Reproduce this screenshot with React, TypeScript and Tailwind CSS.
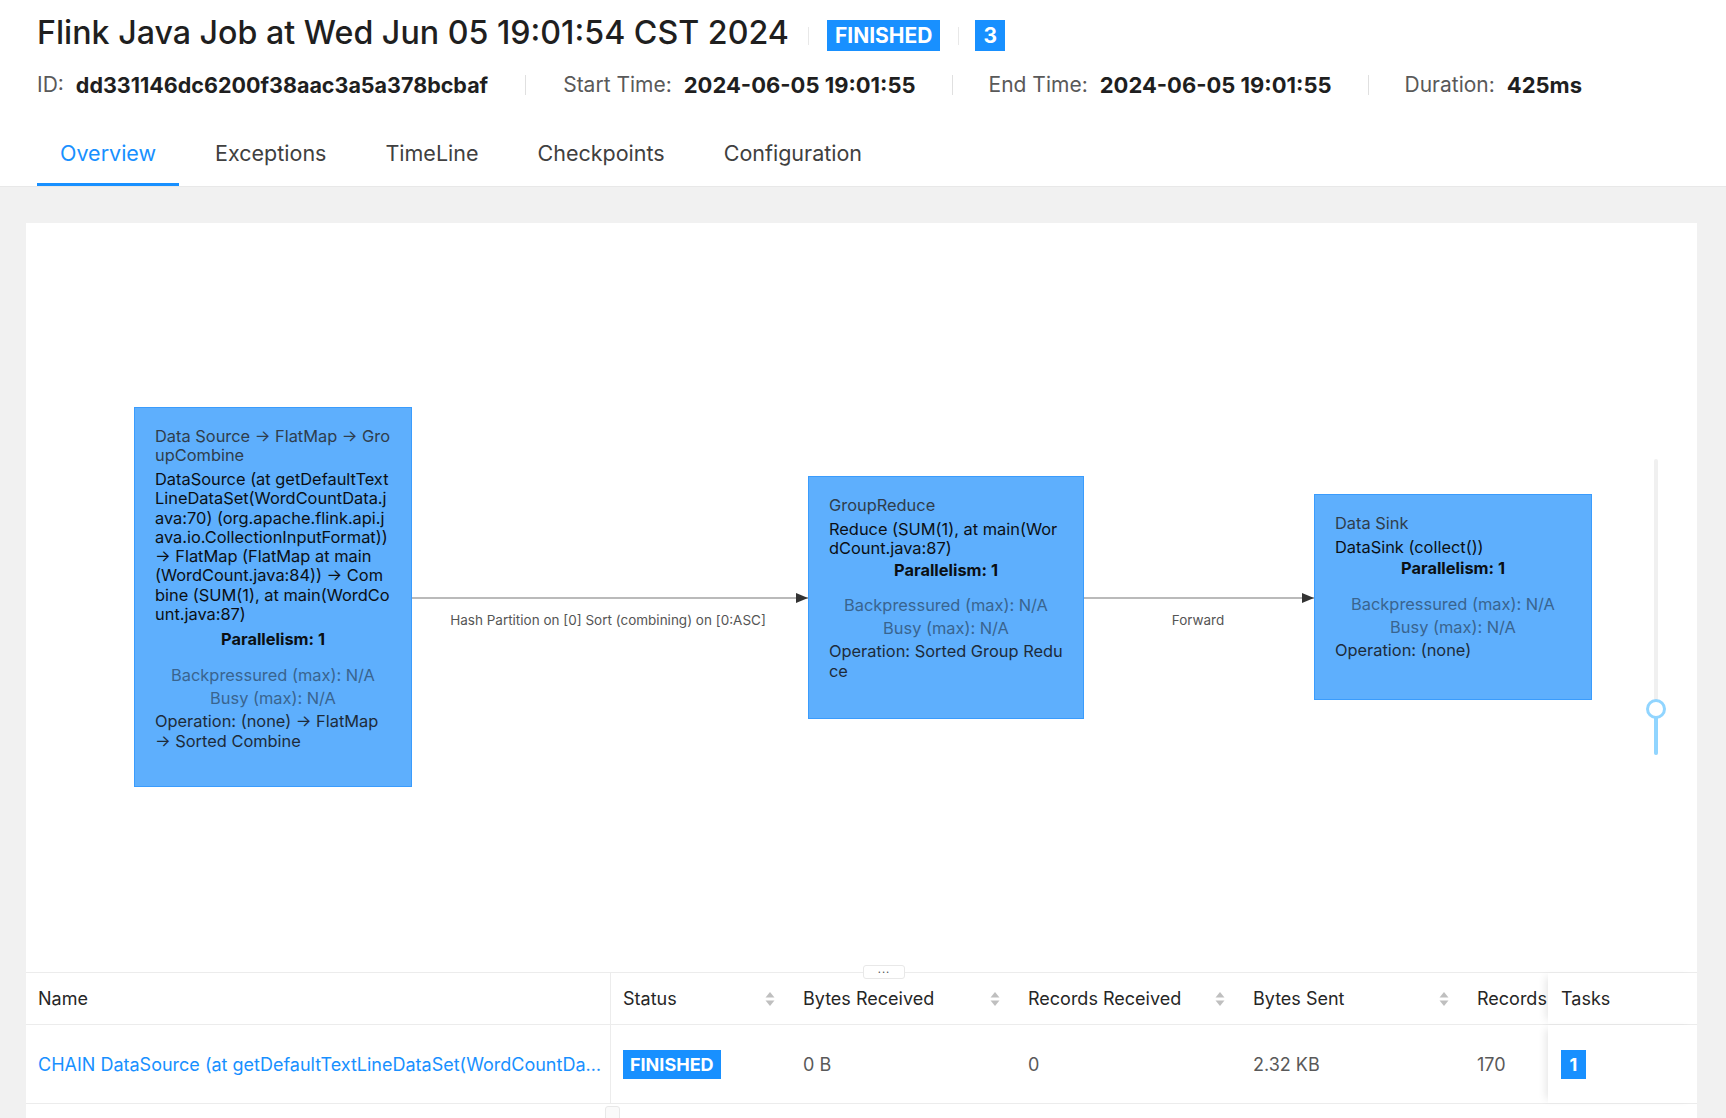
import React from 'react';

// job overview page, flink web ui style

interface NodeProps {
  left: number;
  top: number;
  width: number;
  height: number;
  name: string;
  description: string;
  operation: string;
  gap?: number;
}

function JobNode({ left, top, width, height, name, description, operation, gap = 2 }: NodeProps) {
  return (
    <div
      className="absolute bg-[#5eaffd] border border-[#3a9cfd] px-[20px] pt-[19px] text-[16.4px] leading-[19.3px] break-all"
      style={{ left, top, width, height }}
    >
      <div className="text-[#2f3d4c] leading-[19px]">{name}</div>
      <div className="mt-[5px] text-[#0b0f14]">{description}</div>
      {/* metrics block */}
      <div className="text-center font-bold text-[#0b0f14] break-normal" style={{ marginTop: gap }}>
        Parallelism: 1
      </div>
      <div className="mt-[16px] text-center text-[#39648f] break-normal">Backpressured (max): N/A</div>
      <div className="mt-[4px] text-center text-[#39648f] break-normal">Busy (max): N/A</div>
      <div className="mt-[3px] text-[#1d2b3a] leading-[20px]">{operation}</div>
    </div>
  );
}

function Sorter() {
  return (
    <svg width="10" height="16" viewBox="0 0 10 16" className="shrink-0">
      <path d="M5 1 L9.5 6.5 L0.5 6.5 Z" fill="#bfbfbf" />
      <path d="M5 15 L9.5 9.5 L0.5 9.5 Z" fill="#bfbfbf" />
    </svg>
  );
}

function HeaderCell({ label, width, sort }: { label: string; width: number; sort?: boolean }) {
  return (
    <div className="flex items-center justify-between pl-[12px] pr-[16px] shrink-0 overflow-hidden" style={{ width }}>
      <span className="whitespace-nowrap">{label}</span>
      {sort && <Sorter />}
    </div>
  );
}

export default function App() {
  const tabs = ['Overview', 'Exceptions', 'TimeLine', 'Checkpoints', 'Configuration'];

  return (
    <div className="w-[1726px] h-[1118px] overflow-hidden bg-[#f1f1f1] font-['Inter',_sans-serif]">
      {/* header */}
      <div className="bg-white px-[37px] pt-[20px] border-b border-[#e8e8e8]">
        <div className="flex items-center h-[31px]">
          <h1 className="text-[32.2px] leading-[31px] -mt-[7px] font-medium text-[#1f1f1f] whitespace-nowrap">
            Flink Java Job at Wed Jun 05 19:01:54 CST 2024
          </h1>
          <div className="w-px h-[18px] bg-[#e8e8e8] ml-[19px] mr-[18px]" />
          <span className="h-[31px] px-[8px] flex items-center bg-[#1890ff] text-white text-[21px] font-bold">FINISHED</span>
          <div className="w-px h-[18px] bg-[#e8e8e8] ml-[18px] mr-[16px]" />
          <span className="h-[31px] w-[30px] flex items-center justify-center bg-[#1890ff] text-white text-[21px] font-bold">3</span>
        </div>

        <div className="flex items-center h-[30px] mt-[19px] text-[21px] whitespace-nowrap">
          <span className="text-[#595959]">ID:</span>
          <span className="ml-[12px] font-bold text-[#1f1f1f] text-[21.5px]">dd331146dc6200f38aac3a5a378bcbaf</span>
          <div className="w-px h-[20px] bg-[#e0e0e0] mx-[37px]" />
          <span className="text-[#595959]">Start Time:</span>
          <span className="ml-[12px] font-bold text-[#1f1f1f] text-[22px]">2024-06-05 19:01:55</span>
          <div className="w-px h-[20px] bg-[#e0e0e0] mx-[36px]" />
          <span className="text-[#595959]">End Time:</span>
          <span className="ml-[12px] font-bold text-[#1f1f1f] text-[22px]">2024-06-05 19:01:55</span>
          <div className="w-px h-[20px] bg-[#e0e0e0] mx-[36px]" />
          <span className="text-[#595959]">Duration:</span>
          <span className="ml-[12px] font-bold text-[#1f1f1f] text-[22px]">425ms</span>
        </div>

        <div className="flex mt-[23px] gap-[13px]">
          {tabs.map((t, i) => (
            <div
              key={t}
              className={`px-[23px] pt-[16px] pb-[16px] text-[21.5px] leading-[28px] border-b-[3px] ${
                i === 0 ? 'text-[#1890ff] border-[#1890ff]' : 'text-[#404040] border-transparent'
              }`}
            >
              {t}
            </div>
          ))}
        </div>
      </div>

      {/* card */}
      <div className="ml-[26px] mt-[36px] w-[1671px] bg-white">
        <div className="relative h-[749px]">
          <svg className="absolute left-0 top-0" width="1671" height="749">
            <defs>
              <marker id="arr" markerWidth="12" markerHeight="10" refX="12" refY="5" orient="auto" markerUnits="userSpaceOnUse">
                <path d="M0 0 L12 5 L0 10 Z" fill="#333" />
              </marker>
            </defs>
            <line x1="386" y1="375" x2="782" y2="375" stroke="#777" strokeWidth="1.2" markerEnd="url(#arr)" />
            <line x1="1058" y1="375" x2="1288" y2="375" stroke="#777" strokeWidth="1.2" markerEnd="url(#arr)" />
          </svg>

          <div className="absolute left-[422px] top-[388px] w-[320px] text-center text-[13.5px] leading-[18px] text-[#555] whitespace-nowrap">
            Hash Partition on [0] Sort (combining) on [0:ASC]
          </div>
          <div className="absolute left-[1122px] top-[388px] w-[100px] text-center text-[13.5px] leading-[18px] text-[#555]">
            Forward
          </div>

          <JobNode
            left={108}
            top={184}
            width={278}
            height={380}
            gap={6}
            name="Data Source → FlatMap → GroupCombine"
            description="DataSource (at getDefaultTextLineDataSet(WordCountData.java:70) (org.apache.flink.api.java.io.CollectionInputFormat)) → FlatMap (FlatMap at main(WordCount.java:84)) → Combine (SUM(1), at main(WordCount.java:87)"
            operation="Operation: (none) → FlatMap → Sorted Combine"
          />
          <JobNode
            left={782}
            top={253}
            width={276}
            height={243}
            name="GroupReduce"
            description="Reduce (SUM(1), at main(WordCount.java:87)"
            operation="Operation: Sorted Group Reduce"
          />
          <JobNode
            left={1288}
            top={271}
            width={278}
            height={206}
            name="Data Sink"
            description="DataSink (collect())"
            operation="Operation: (none)"
          />

          {/* zoom slider */}
          <div className="absolute left-[1628px] top-[236px] w-[4px] h-[296px] rounded-full bg-[#f0f0f0]" />
          <div className="absolute left-[1628px] top-[485px] w-[4px] h-[47px] rounded-full bg-[#91d5ff]" />
          <div className="absolute left-[1620px] top-[476px] w-[20px] h-[20px] rounded-full bg-white border-[3px] border-[#91d5ff]" />

          <div className="absolute left-[837px] top-[742px] w-[42px] h-[14px] rounded-[3px] border border-[#e8e8e8] bg-white flex items-center justify-center text-[11px] leading-[8px] text-[#555] tracking-[1px]">
            ···
          </div>
        </div>

        {/* vertex table */}
        <div className="border-t border-[#ececec] text-[18px]">
          <div className="flex h-[52px] items-center text-[#262626] border-b border-[#ececec]">
            <div className="w-[585px] h-full flex items-center pl-[12px] border-r border-[#ececec] shrink-0">Name</div>
            <HeaderCell label="Status" width={180} sort />
            <HeaderCell label="Bytes Received" width={225} sort />
            <HeaderCell label="Records Received" width={225} sort />
            <HeaderCell label="Bytes Sent" width={224} sort />
            <div className="w-[83px] pl-[12px] overflow-hidden whitespace-nowrap shrink-0">Records Sent</div>
            <div className="w-[149px] h-full flex items-center pl-[13px] bg-white shadow-[-6px_0_8px_-4px_rgba(0,0,0,0.1)] shrink-0">Tasks</div>
          </div>
          <div className="flex h-[79px] items-center text-[#595959] border-b border-[#ececec]">
            <div className="w-[585px] h-full flex items-center pl-[12px] pr-[5px] border-r border-[#ececec] shrink-0 min-w-0">
              <span className="block min-w-0 text-[#1890ff] whitespace-nowrap overflow-hidden text-ellipsis">
                CHAIN DataSource (at getDefaultTextLineDataSet(WordCountData.java:70) (org.apache.flink.api.java.io.CollectionInputFormat))
              </span>
            </div>
            <div className="w-[180px] pl-[12px] shrink-0">
              <span className="inline-flex items-center h-[29px] px-[7px] bg-[#1890ff] text-white font-bold text-[18px]">FINISHED</span>
            </div>
            <div className="w-[225px] pl-[12px] shrink-0">0 B</div>
            <div className="w-[225px] pl-[12px] shrink-0">0</div>
            <div className="w-[224px] pl-[12px] shrink-0">2.32 KB</div>
            <div className="w-[83px] pl-[12px] shrink-0">170</div>
            <div className="w-[149px] h-full flex items-center pl-[13px] bg-white shadow-[-6px_0_8px_-4px_rgba(0,0,0,0.1)] shrink-0">
              <span className="inline-flex items-center justify-center h-[29px] w-[25px] bg-[#1890ff] text-white font-bold">1</span>
            </div>
          </div>
          <div className="relative h-[20px]">
            <div className="absolute left-[579px] top-[2px] w-[15px] h-[20px] rounded-t-[3px] border border-[#e8e8e8] bg-[#fafafa]" />
          </div>
        </div>
      </div>
    </div>
  );
}
